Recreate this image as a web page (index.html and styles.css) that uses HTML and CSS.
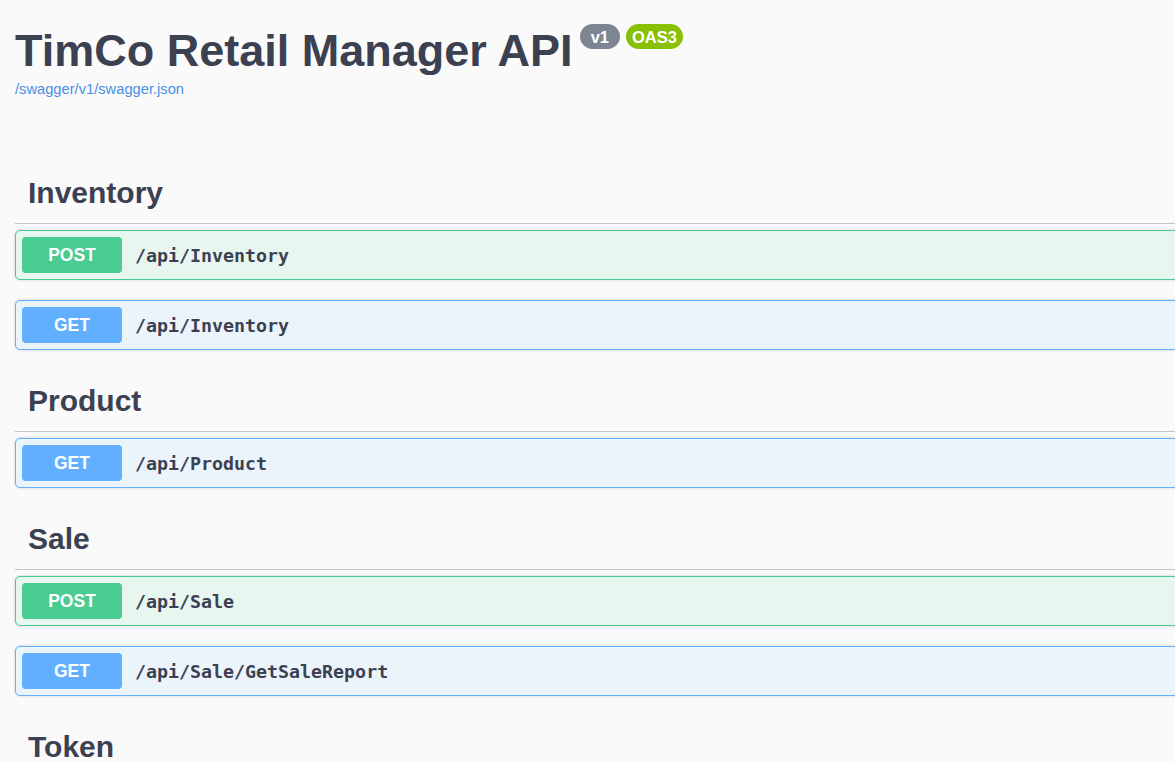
FILE: index.html
```html
<!DOCTYPE html>
<html lang="en">
<head>
<meta charset="utf-8">
<title>Swagger UI</title>
<link rel="stylesheet" href="styles.css">
</head>
<body>
<div class="wrapper">
  <div class="info">
    <div class="title-row">
      <h2 class="title">TimCo Retail Manager API</h2>
      <span class="badge badge-version">v1</span>
      <span class="badge badge-oas">OAS3</span>
    </div>
    <a class="spec-link" href="#">/swagger/v1/swagger.json</a>
  </div>

  <section class="tag-section">
    <h3 class="tag">Inventory</h3>
    <div class="op op-post"><span class="method">POST</span><span class="path">/api/Inventory</span></div>
    <div class="op op-get"><span class="method">GET</span><span class="path">/api/Inventory</span></div>
  </section>

  <section class="tag-section">
    <h3 class="tag">Product</h3>
    <div class="op op-get"><span class="method">GET</span><span class="path">/api/Product</span></div>
  </section>

  <section class="tag-section">
    <h3 class="tag">Sale</h3>
    <div class="op op-post"><span class="method">POST</span><span class="path">/api/Sale</span></div>
    <div class="op op-get"><span class="method">GET</span><span class="path">/api/Sale/GetSaleReport</span></div>
  </section>

  <section class="tag-section">
    <h3 class="tag">Token</h3>
  </section>
</div>
</body>
</html>
```

FILE: styles.css
```css
html, body {
  margin: 0;
  padding: 0;
  background: #fafafa;
  overflow: hidden;
}

body {
  font-family: "Liberation Sans", Arial, sans-serif;
  color: #3b4151;
}

.wrapper {
  width: 1500px;
  padding: 0 0 0 15px;
}

.info {
  padding-top: 25px;
  margin-bottom: 64px;
}

.title-row {
  display: flex;
  align-items: flex-start;
}

.title {
  margin: 0;
  font-size: 45px;
  line-height: 52px;
  font-weight: 700;
  color: #3b4151;
}

.badge {
  display: inline-block;
  height: 25px;
  box-sizing: border-box;
  padding-top: 2px;
  line-height: 23px;
  margin-top: -1px;
  border-radius: 13px;
  color: #fff;
  font-size: 16.5px;
  font-weight: 700;
}

.badge-version {
  margin-left: 7px;
  padding-left: 11px;
  padding-right: 11px;
  background: #7d8492;
}

.badge-oas {
  margin-left: 6px;
  padding-left: 6px;
  padding-right: 6px;
  background: #89bf04;
}

.spec-link {
  display: block;
  margin-top: 4px;
  font-size: 14.7px;
  line-height: 17px;
  color: #4990e2;
  text-decoration: none;
}

.tag {
  margin: 0 0 6px;
  padding: 16px 20px 15px 13px;
  font-size: 30px;
  line-height: 30px;
  font-weight: 700;
  border-bottom: 1px solid #c1c3c7;
}

.op {
  display: flex;
  align-items: center;
  height: 50px;
  box-sizing: border-box;
  padding: 0 6px;
  margin: 0 0 20px;
  border: 1px solid;
  border-radius: 5px;
  box-shadow: 0 0 3px rgba(0, 0, 0, 0.19);
}

.op-post {
  border-color: #49cc90;
  background: #e8f6f0;
}

.op-get {
  border-color: #61affe;
  background: #ebf3fb;
}

.method {
  width: 100px;
  height: 36px;
  line-height: 36px;
  flex: none;
  text-align: center;
  border-radius: 4px;
  color: #fff;
  font-size: 17.5px;
  font-weight: 700;
}

.op-post .method {
  background: #49cc90;
}

.op-get .method {
  background: #61affe;
}

.path {
  padding-left: 13px;
  font-family: "DejaVu Sans Mono", "Liberation Mono", monospace;
  font-size: 18.3px;
  font-weight: 700;
  color: #3b4151;
}
```
